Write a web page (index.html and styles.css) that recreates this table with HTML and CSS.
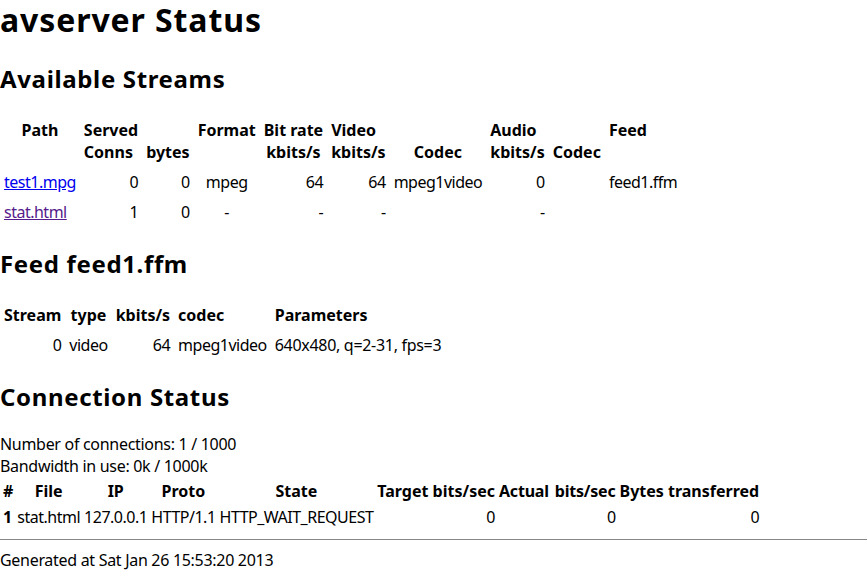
FILE: index.html
```html
<!DOCTYPE html>
<html>
<head>
<meta charset="utf-8">
<title>avserver Status</title>
<link rel="stylesheet" href="styles.css">
</head>
<body>
<h1 class="title">avserver Status</h1>
<h2 class="section">Available Streams</h2>
<table class="grid">
<tr><th class="top">Path</th><th class="left">Served<br>Conns</th><th><br>bytes</th><th class="top">Format</th><th>Bit rate<br>kbits/s</th><th class="left">Video<br>kbits/s</th><th><br>Codec</th><th class="left">Audio<br>kbits/s</th><th><br>Codec</th><th class="left top">Feed</th></tr>
<tr><td><a class="link" href="#test1">test1.mpg</a></td><td class="r">0</td><td class="r">0</td><td class="c">mpeg</td><td class="r">64</td><td class="r">64</td><td>mpeg1video</td><td class="r">0</td><td></td><td>feed1.ffm</td></tr>
<tr><td><a class="link visited" href="#stat">stat.html</a></td><td class="r">1</td><td class="r">0</td><td class="c">-</td><td class="r">-</td><td class="r">-</td><td></td><td class="r">-</td><td></td><td></td></tr>
</table>
<h2 class="section">Feed feed1.ffm</h2>
<table class="grid">
<tr><th>Stream</th><th>type</th><th>kbits/s</th><th class="left">codec</th><th class="left">Parameters</th></tr>
<tr><td class="r">0</td><td>video</td><td class="r">64</td><td>mpeg1video</td><td class="wide">640x480, q=2-31, fps=3</td></tr>
</table>
<h2 class="section">Connection Status</h2>
<div class="info">Number of connections: 1 / 1000<br>Bandwidth in use: 0k / 1000k</div>
<table class="conn">
<tr><th>#</th><th>File</th><th>IP</th><th>Proto</th><th>State</th><th>Target bits/sec</th><th class="spaced">Actual bits/sec</th><th>Bytes transferred</th></tr>
<tr><td><b>1</b></td><td>stat.html</td><td>127.0.0.1</td><td>HTTP/1.1</td><td>HTTP_WAIT_REQUEST</td><td class="r">0</td><td class="r">0</td><td class="r">0</td></tr>
</table>
<hr class="rule">
<div class="footer">Generated at Sat Jan 26 15:53:20 2013</div>
</body>
</html>
```

FILE: styles.css
```css
html, body {
  margin: 0;
  padding: 0;
  background: #fff;
}
body {
  font-family: "Noto Sans", "Open Sans", sans-serif;
  font-size: 16px;
  color: #000;
  letter-spacing: -0.3px;
}
.title {
  font-size: 32px;
  font-weight: bold;
  letter-spacing: 0.9px;
  margin: 0 0 23px 0;
  line-height: 40px;
}
.section {
  font-size: 24px;
  font-weight: bold;
  letter-spacing: 0.65px;
  margin: 21px 0 20px;
  line-height: 32px;
}
.grid {
  border-collapse: separate;
  border-spacing: 0;
}
.grid th, .grid td {
  padding: 4px;
}
.conn {
  border-spacing: 2px;
}
.conn th, .conn td {
  padding: 1px;
}
th {
  font-weight: bold;
  letter-spacing: 0;
  text-align: center;
  vertical-align: middle;
}
th.spaced { word-spacing: 2px; letter-spacing: -0.2px; }
td {
  vertical-align: middle;
  letter-spacing: -0.5px;
}
td.wide { letter-spacing: -0.3px; }
th.left { text-align: left; }
th.top { vertical-align: top; }
td.r { text-align: right; }
td.c { text-align: center; }
.link { color: #0000ee; text-decoration: underline; }
.link.visited { color: #551a8b; }
.info { line-height: 22px; }
.rule {
  border: 0;
  border-top: 1px solid #888;
  margin: 8px 0 9px;
  height: 0;
}
.footer { line-height: 22px; }
```
